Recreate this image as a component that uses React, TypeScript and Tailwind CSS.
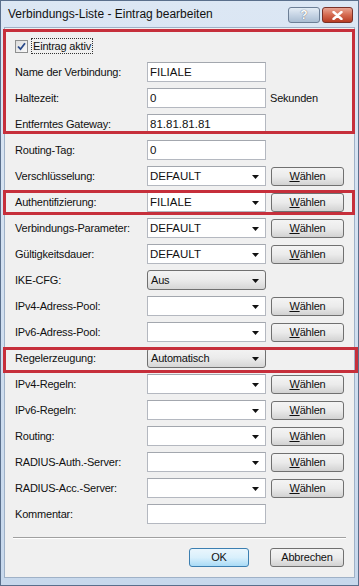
import React from 'react';

type Row = {
    label: string;
    kind: 'input' | 'combo' | 'list';
    value?: string;
    button?: boolean;
    suffix?: string;
};

const rows: Row[] = [
    { label: 'Name der Verbindung:', kind: 'input', value: 'FILIALE' },
    { label: 'Haltezeit:', kind: 'input', value: '0', suffix: 'Sekunden' },
    { label: 'Entferntes Gateway:', kind: 'input', value: '81.81.81.81' },
    { label: 'Routing-Tag:', kind: 'input', value: '0' },
    { label: 'Verschlüsselung:', kind: 'combo', value: 'DEFAULT', button: true },
    { label: 'Authentifizierung:', kind: 'combo', value: 'FILIALE', button: true },
    { label: 'Verbindungs-Parameter:', kind: 'combo', value: 'DEFAULT', button: true },
    { label: 'Gültigkeitsdauer:', kind: 'combo', value: 'DEFAULT', button: true },
    { label: 'IKE-CFG:', kind: 'list', value: 'Aus' },
    { label: 'IPv4-Adress-Pool:', kind: 'combo', button: true },
    { label: 'IPv6-Adress-Pool:', kind: 'combo', button: true },
    { label: 'Regelerzeugung:', kind: 'list', value: 'Automatisch' },
    { label: 'IPv4-Regeln:', kind: 'combo', button: true },
    { label: 'IPv6-Regeln:', kind: 'combo', button: true },
    { label: 'Routing:', kind: 'combo', button: true },
    { label: 'RADIUS-Auth.-Server:', kind: 'combo', button: true },
    { label: 'RADIUS-Acc.-Server:', kind: 'combo', button: true },
    { label: 'Kommentar:', kind: 'input' },
];

const Arrow = () => (
    <svg width="7" height="4" viewBox="0 0 7 4" className="absolute right-[6px] top-[8px]">
        <path d="M0 0 H7 L3.5 4 Z" fill="#111" />
    </svg>
);

const Field: React.FC<{ row: Row }> = ({ row }) => {
    if (row.kind === 'list') {
        return (
            <div className="relative w-[119px] h-[20px] rounded-[3px] border border-[#707070] bg-gradient-to-b from-[#f3f3f3] via-[#ebebeb] to-[#d6d6d6] pl-[3px] text-[11px] tracking-[-0.2px] leading-[18px]">
                {row.value}
                <Arrow />
            </div>
        );
    }
    return (
        <div className="relative w-[119px] h-[20px] border border-[#b4b8c0] border-t-[#a3a7ae] bg-white pl-[2px] text-[11.5px] leading-[18px]">
            {row.value}
            {row.kind === 'combo' && <Arrow />}
        </div>
    );
};

const WinButton: React.FC<{ children: React.ReactNode; primary?: boolean; w: string }> = ({ children, primary, w }) => (
    <div
        className={`${w} h-[19px] rounded-[3px] border flex items-center justify-center text-[11px] tracking-[-0.2px] ${
            primary
                ? 'border-[#3c7fb1] bg-gradient-to-b from-[#eaf6fd] via-[#d9f0fc] to-[#a9dbf6]'
                : 'border-[#707070] bg-gradient-to-b from-[#f4f4f4] via-[#ebebeb] to-[#d2d2d2]'
        }`}
    >
        {children}
    </div>
);

const App: React.FC = () => {
    return (
        <div className="relative w-[359px] h-[586px] overflow-hidden bg-gradient-to-b from-[#dce7f4] to-[#c7d8ec] border border-[#5a6f8c] font-['Liberation_Sans',Arial,sans-serif] text-[#111]">
            {/* title bar */}
            <div className="h-[26px] flex items-center justify-between pl-[7px] pr-[5px]">
                <span className="text-[12px] text-[#111]">Verbindungs-Liste - Eintrag bearbeiten</span>
                <div className="flex gap-[2px] mt-[2px]">
                    <div className="w-[32px] h-[16px] rounded-[3px] border border-[#6d7f96] bg-gradient-to-b from-[#e4ecf5] via-[#c6d4e4] to-[#aabdd2] flex items-center justify-center text-[12px] font-bold text-white [text-shadow:0_0_1px_#334]">
                        ?
                    </div>
                    <div className="w-[31px] h-[16px] rounded-[3px] border border-[#7a3128] bg-gradient-to-b from-[#e8a493] via-[#d4694f] to-[#b73b22] flex items-center justify-center">
                        <svg width="11" height="9" viewBox="0 0 11 9">
                            <path d="M1.5 1 L9.5 8 M9.5 1 L1.5 8" stroke="#fff" strokeWidth="2.4" strokeLinecap="round" />
                        </svg>
                    </div>
                </div>
            </div>

            {/* client area */}
            <div className="mx-[3px] h-[551px] bg-[#f0f0f0] border border-[#9fb1c7] pt-[5px]">
                <div className="h-[26px] flex items-center pl-[10px] gap-[3px]">
                    <div className="w-[13px] h-[13px] border border-[#8e8f8f] bg-gradient-to-br from-[#dcdcdc] to-[#fafafa] flex items-center justify-center">
                        <svg width="9" height="9" viewBox="0 0 9 9">
                            <path d="M1 4.5 L3.5 7.2 L8 1.2" stroke="#2a4a8a" strokeWidth="1.8" fill="none" />
                        </svg>
                    </div>
                    <span className="text-[11px] tracking-[-0.2px] border border-dotted border-[#333] px-[1px] leading-[14px]">Eintrag aktiv</span>
                </div>

                {rows.map((row, i) => (
                    <div key={i} className="h-[26px] flex items-center pl-[10px]">
                        <span className="w-[132px] text-[11px] tracking-[-0.2px]">{row.label}</span>
                        <Field row={row} />
                        {row.button && (
                            <div className="ml-[5px]">
                                <WinButton w="w-[73px]">
                                    <span><span className="underline">W</span>ählen</span>
                                </WinButton>
                            </div>
                        )}
                        {row.suffix && <span className="ml-[4px] text-[11px] tracking-[-0.2px]">{row.suffix}</span>}
                    </div>
                ))}

                <div className="mt-[10px] mx-[8px] h-[2px] border-t border-[#a0a0a0] border-b border-b-white" />

                <div className="flex justify-end gap-[21px] pr-[10px] mt-[9px]">
                    <WinButton w="w-[60px]" primary>OK</WinButton>
                    <WinButton w="w-[74px]">Abbrechen</WinButton>
                </div>
            </div>

            {/* red annotation frames */}
            <div className="absolute left-[2px] top-[28px] w-[352px] h-[105px] border-[3px] border-[#c62f3b]" />
            <div className="absolute left-[2px] top-[189px] w-[352px] h-[25px] border-[3px] border-[#c62f3b]" />
            <div className="absolute left-[2px] top-[346px] w-[355px] h-[26px] border-[3px] border-[#c62f3b]" />
        </div>
    );
};

export default App;
